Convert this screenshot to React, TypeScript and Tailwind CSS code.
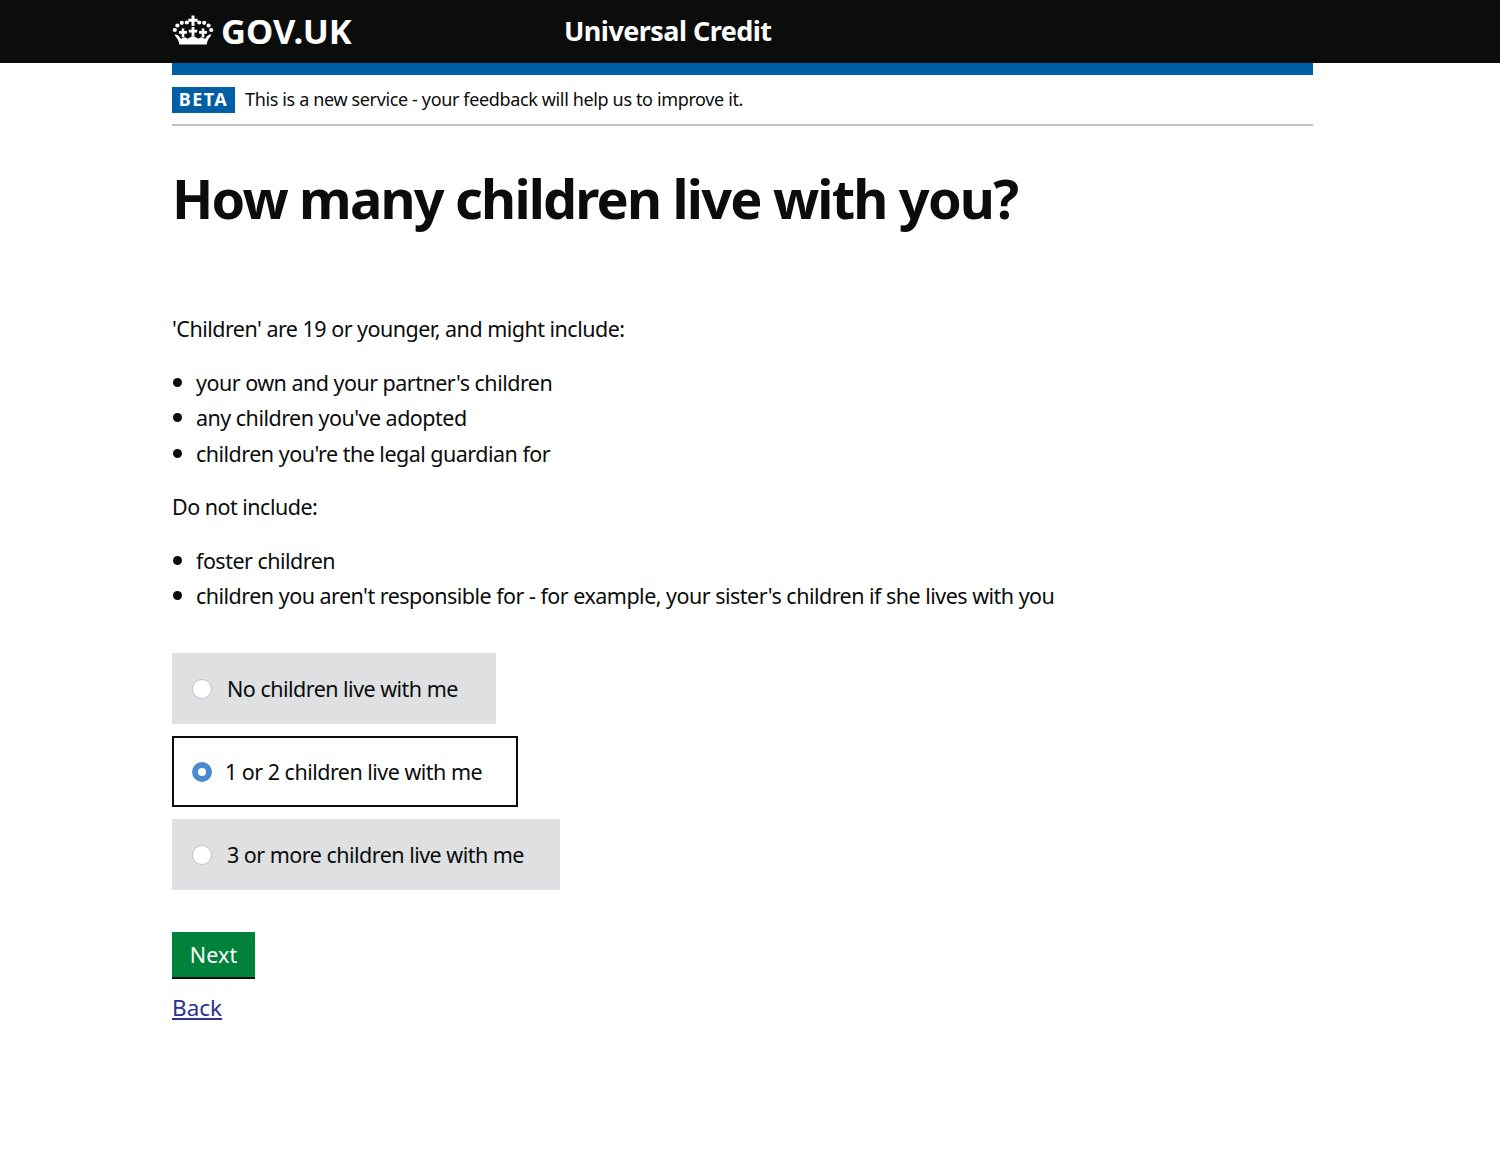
import React, { useState } from 'react';

const options = [
  { id: 'none', label: 'No children live with me', width: 'w-[324px]' },
  { id: 'some', label: '1 or 2 children live with me', width: 'w-[346px]' },
  { id: 'many', label: '3 or more children live with me', width: 'w-[388px]' },
];

const Crown = () => (
  <svg width="42" height="32" viewBox="0 0 42 32" fill="#fff" className="shrink-0">
    {/* cross on top */}
    <path d="M19.500 0.500h3v3.200h3.200v3h-3.200V11h-3V6.700h-3.200v-3h3.200z" />
    {/* arc of jewels */}
    <circle cx="14.800" cy="7.500" r="2.100" />
    <circle cx="27.200" cy="7.500" r="2.100" />
    <circle cx="9.800" cy="7.800" r="2.100" />
    <circle cx="32.200" cy="7.800" r="2.100" />
    <circle cx="5.400" cy="10.500" r="2.100" />
    <circle cx="36.600" cy="10.500" r="2.100" />
    <circle cx="2.800" cy="15" r="2.100" />
    <circle cx="39.200" cy="15" r="2.100" />
    {/* small crosses */}
    <path d="M19.600 12h2.800v2.800h2.800v2.800h-2.800v4h-2.800v-4h-2.800v-2.800h2.800z" />
    <path d="M9.700 13.500h2.600v2.600h2.600v2.600h-2.600v3.600H9.700v-3.600H7.100v-2.600h2.600z" />
    <path d="M29.700 13.500h2.600v2.600h2.600v2.600h-2.600v3.600h-2.600v-3.600h-2.600v-2.600h2.600z" />
    {/* base */}
    <path d="M2.500 19.500c2.500-.6 4.300 1.200 5.500 3.200.6 1 1.500 1.400 2.500.4 1.200-1.100 2.800-1.100 4 0 .8.700 1.500.7 2.300 0 1.200-1.100 2.800-1.600 4.200-1.600s3 .5 4.200 1.600c.8.700 1.500.7 2.300 0 1.200-1.100 2.800-1.100 4 0 1 1 1.900.6 2.500-.4 1.200-2 3-3.800 5.500-3.200-.8 1.800-3 3.900-3.800 6-.5 1.300-.8 2.600-1 4H7.300c-.2-1.400-.5-2.700-1-4-.8-2.100-3-4.200-3.800-6z" />
  </svg>
);

const Bullets = ({ items }: { items: string[] }) => (
  <ul className="flex flex-col gap-[10.5px] mb-[28.5px]">
    {items.map((item) => (
      <li key={item} className="flex items-center h-[25px]">
        <span className="w-[9px] h-[9px] rounded-full bg-[#0b0c0c] ml-[1px] mr-[14px]" />
        {item}
      </li>
    ))}
  </ul>
);

export default function App() {
  const [selected, setSelected] = useState('some');

  return (
    <div className="min-h-[1150px] bg-white text-[#0b0c0c] font-['Noto_Sans',sans-serif] text-[21.5px] leading-[25px] tracking-[-0.52px]">
      <header className="h-[63px] bg-[#0b0c0c] text-white">
        <div className="w-[1141px] ml-[172px] flex items-center h-full pb-[2px]">
          <Crown />
          <span className="w-[343px] ml-[7px] text-[34.5px] font-bold tracking-normal">GOV.UK</span>
          <span className="text-[27px] font-bold tracking-[-0.55px]">Universal Credit</span>
        </div>
      </header>

      <main className="w-[1141px] ml-[172px]">
        <div className="h-[12px] bg-[#005ea5]" />
        <div className="h-[51px] flex items-center gap-[10px] border-b-2 border-[#bfc1c3] text-[18px] tracking-[-0.36px]">
          <strong className="h-[26px] w-[63px] flex items-center justify-center bg-[#005ea5] text-white font-bold tracking-[1.5px]">BETA</strong>
          <span>This is a new service - your feedback will help us to improve it.</span>
        </div>

        <h1 className="mt-[36px] mb-[82px] text-[54px] leading-[72px] font-bold tracking-[-1.8px]">How many children live with you?</h1>

        <p className="mb-[28.5px]">'Children' are 19 or younger, and might include:</p>
        <Bullets
          items={[
            "your own and your partner's children",
            "any children you've adopted",
            "children you're the legal guardian for",
          ]}
        />
        <p className="mb-[28.5px]">Do not include:</p>
        <Bullets
          items={[
            'foster children',
            "children you aren't responsible for - for example, your sister's children if she lives with you",
          ]}
        />

        <div className="flex flex-col gap-[12px] mt-[45px]">
          {options.map((option) => {
            const active = selected === option.id;
            return (
              <button
                key={option.id}
                onClick={() => setSelected(option.id)}
                className={`${option.width} h-[71px] flex items-center text-left ${
                  active ? 'bg-white border-2 border-[#0b0c0c] pl-[18px]' : 'bg-[#dee0e2] pl-[20px]'
                }`}
              >
                {active ? (
                  <span className="w-[20px] h-[20px] rounded-full border-[6px] border-[#4a8bd0] bg-white mr-[13px]" />
                ) : (
                  <span className="w-[20px] h-[20px] rounded-full border border-[#bfc1c3] bg-white mr-[15px]" />
                )}
                {option.label}
              </button>
            );
          })}
        </div>

        <button className="mt-[42px] block w-[83px] h-[47px] bg-[#00823b] border-b-2 border-[#0b0c0c] text-white tracking-[0.1px]">Next</button>
        <a href="#" className="inline-block mt-[16px] text-[22.5px] text-[#2e3191] underline tracking-normal">Back</a>
      </main>
    </div>
  );
}
